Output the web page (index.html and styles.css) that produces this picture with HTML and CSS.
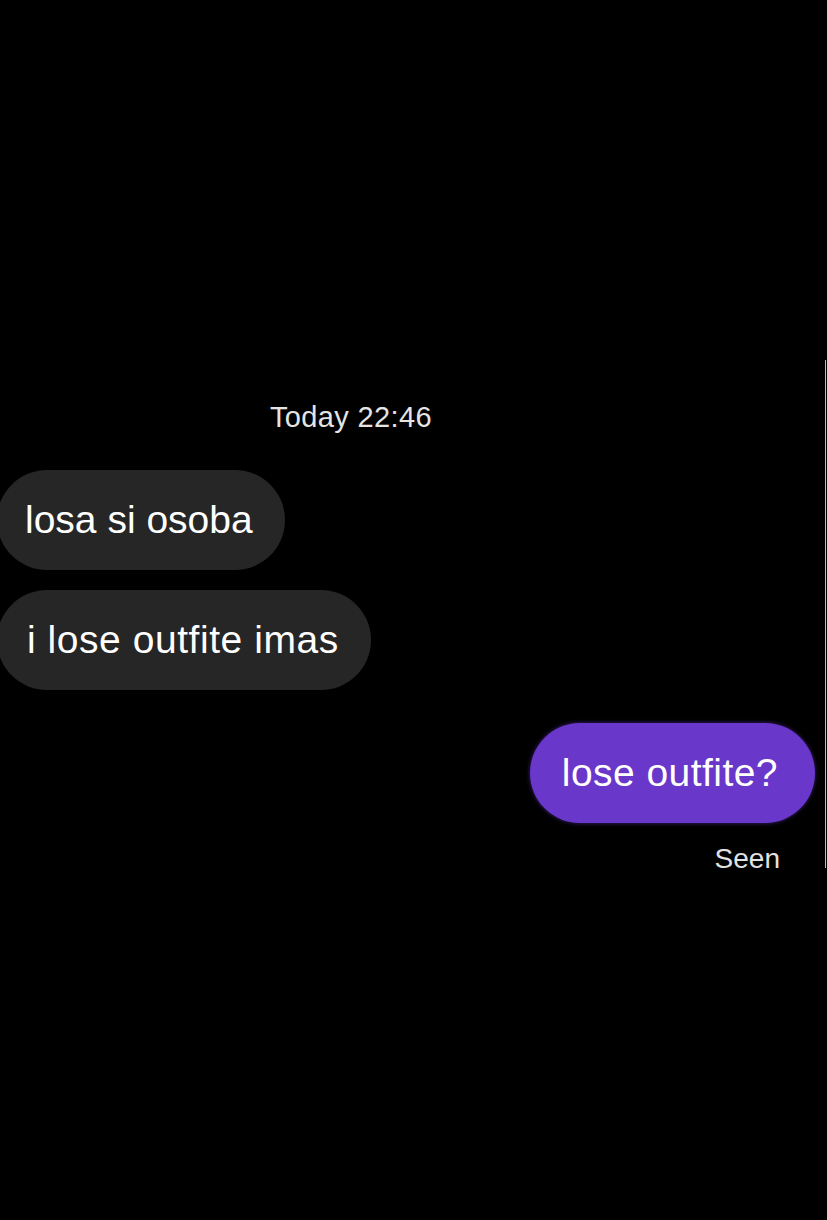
FILE: index.html
```html
<!DOCTYPE html>
<html lang="en">
<head>
<meta charset="utf-8">
<title>Chat</title>
<link rel="stylesheet" href="styles.css">
</head>
<body>
<main class="chat">
  <div class="stamp">Today 22:46</div>
  <div class="bubble in first">losa si osoba</div>
  <div class="bubble in second">i lose outfite imas</div>
  <div class="bubble out">lose outfite?</div>
  <div class="seen">Seen</div>
</main>
<div class="edge-line"></div>
</body>
</html>
```

FILE: styles.css
```css
html, body {
  margin: 0;
  padding: 0;
  background: #000;
}
body {
  width: 827px;
  height: 1220px;
  overflow: hidden;
  position: relative;
  font-family: "Liberation Sans", Arial, sans-serif;
  color: #fff;
}
.chat {
  display: flex;
  flex-direction: column;
  padding-top: 400px;
}
.stamp {
  font-size: 29px;
  line-height: 34px;
  color: #e4e4e4;
  padding-left: 270px;
  letter-spacing: 0.35px;
}
.bubble {
  height: 100px;
  border-radius: 50px;
  display: flex;
  align-items: center;
  font-size: 39px;
  box-sizing: border-box;
}
.in {
  align-self: flex-start;
  background: #262626;
  margin-left: -3px;
}
.first {
  margin-top: 36px;
  padding: 0 32px 0 28px;
}
.second {
  margin-top: 20px;
  padding: 0 32px 0 30px;
  letter-spacing: 0.55px;
}
.out {
  align-self: flex-end;
  margin-top: 33px;
  margin-right: 12px;
  background: #6a37cb;
  box-shadow: 0 0 4px rgba(110, 60, 210, 0.6);
  padding: 0 37px 0 32px;
  letter-spacing: 0.45px;
}
.seen {
  align-self: flex-end;
  margin-top: 20px;
  margin-right: 47px;
  font-size: 28px;
  line-height: 32px;
  color: #e2e2e2;
}
.edge-line {
  position: absolute;
  left: 825px;
  top: 360px;
  width: 1px;
  height: 508px;
  background: #bdbdbd;
}
```
